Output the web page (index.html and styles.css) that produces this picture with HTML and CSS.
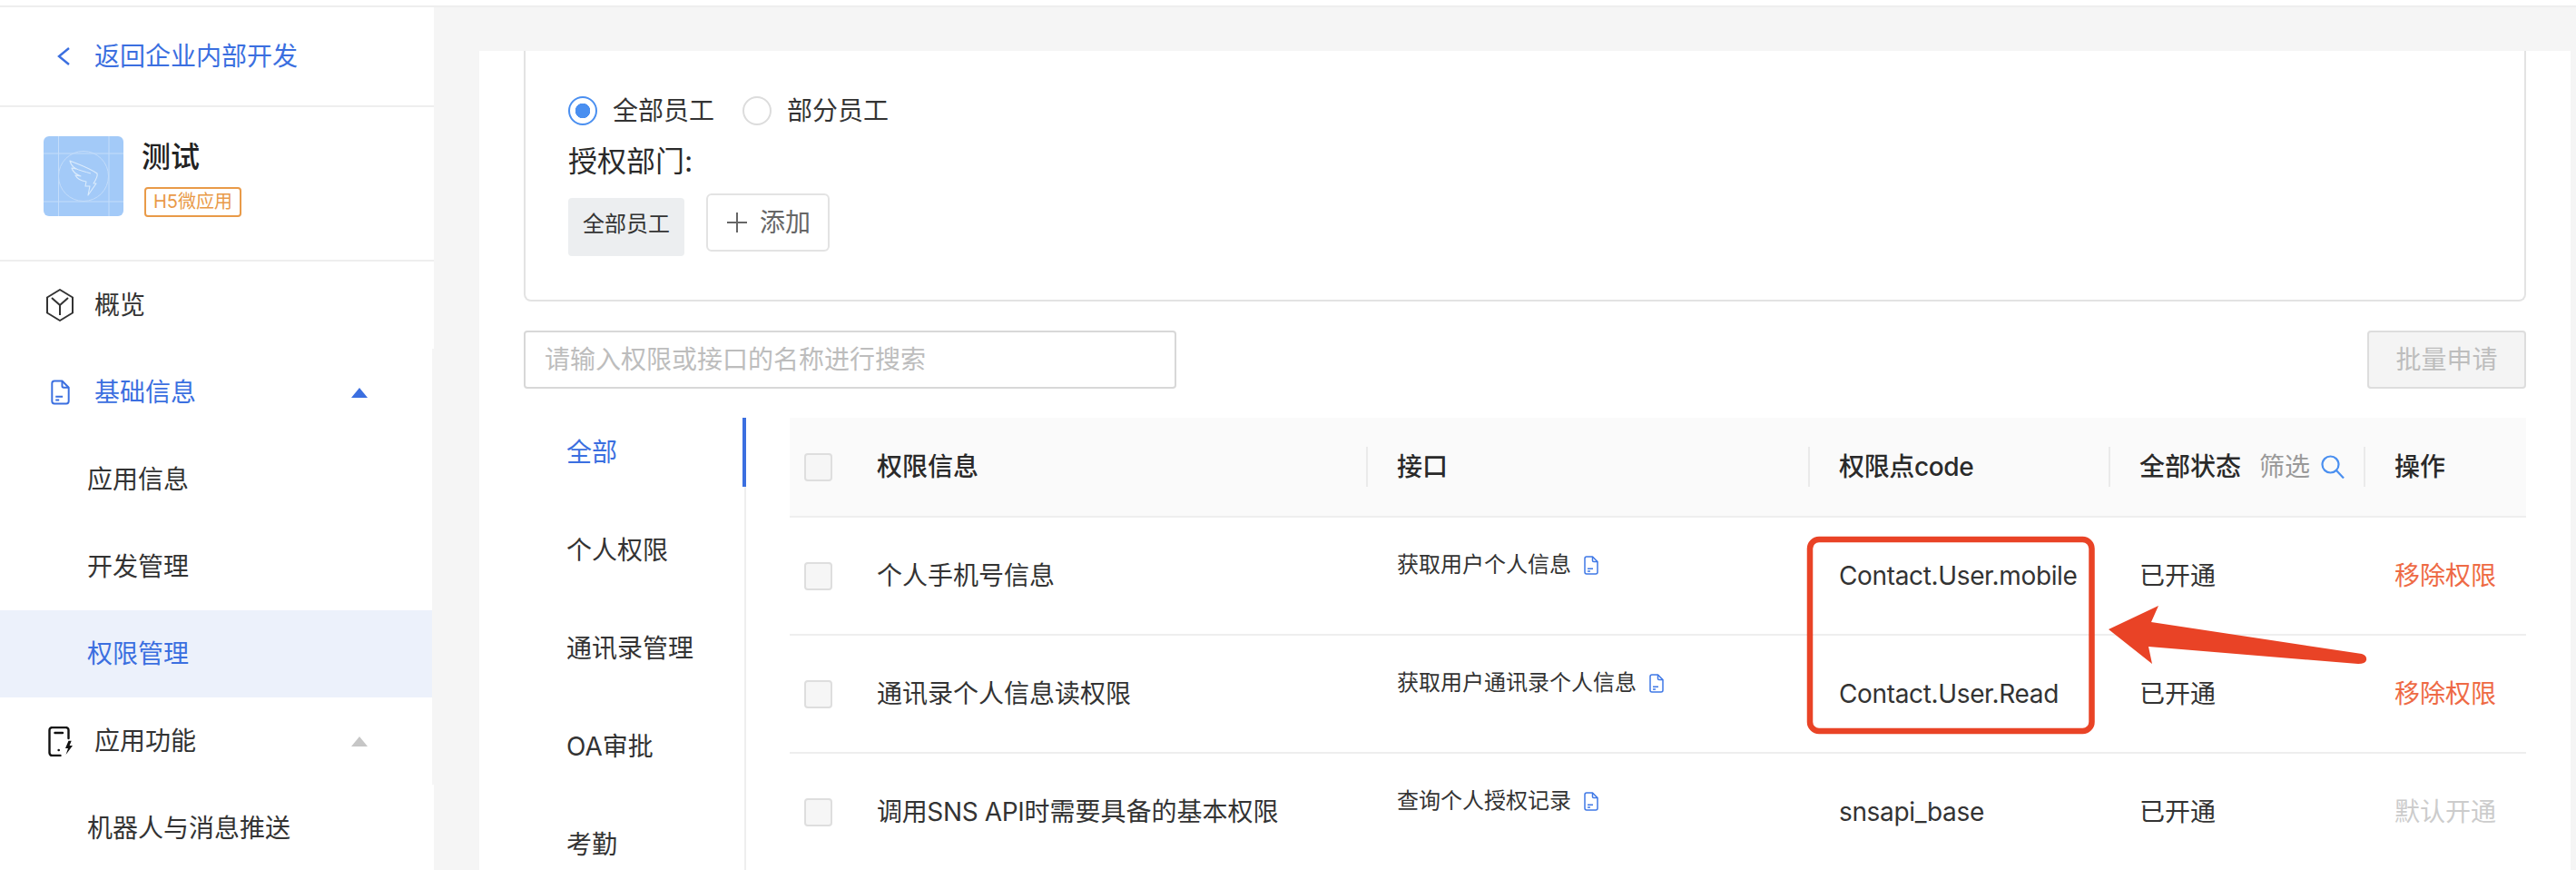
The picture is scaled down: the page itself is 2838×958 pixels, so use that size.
FILE: index.html
```html
<!DOCTYPE html>
<html lang="zh-CN">
<head>
<meta charset="utf-8">
<title>权限管理</title>
<link rel="stylesheet" href="styles.css">
</head>
<body>
<svg class="sprite" width="0" height="0" aria-hidden="true">
  <symbol id="doc" viewBox="0 0 16 21">
    <path d="M3 1h6.5L15 6.5V18a2 2 0 0 1-2 2H3a2 2 0 0 1-2-2V3a2 2 0 0 1 2-2z" fill="none" stroke="currentColor" stroke-width="1.5" stroke-linejoin="round"/>
    <path d="M9.5 1v4.2a1.3 1.3 0 0 0 1.3 1.3H15M4 14.2h6M4 17h3" fill="none" stroke="currentColor" stroke-width="1.5"/>
  </symbol>
</svg>
<div class="topbar"></div>
<div class="shell">
  <aside class="sidebar">
    <div class="back">
      <svg class="chevron" width="16" height="22" viewBox="0 0 16 22"><path d="M14 2 3 11l11 9" fill="none" stroke="#3b6fe0" stroke-width="2.4"/></svg>
      <span>返回企业内部开发</span>
    </div>
    <div class="app">
      <svg class="app-icon" width="88" height="88" viewBox="0 0 88 88">
        <rect width="88" height="88" rx="6" fill="#a3caf8"/>
        <path d="M16.5 0v88M72 0v88M0 19h88M0 72h88" stroke="#c4ddfa" stroke-width="1" fill="none"/>
        <circle cx="44" cy="44" r="27.500" fill="none" stroke="#c4ddfa" stroke-width="1"/>
        <path d="M29 27c10 4 22 8 30 14 1 3-2 8-4 11h3L49 65l2-10h-5l1-5c-6-1-10-3-12-7l6 1c-5-2-9-5-10-9l5 1c-4-2-6-5-7-9z" fill="none" stroke="#dcecfc" stroke-width="1.100" stroke-linejoin="round"/>
        <path d="M34 35c6 3 12 4 18 6" fill="none" stroke="#dcecfc" stroke-width="1"/>
      </svg>
      <div class="app-info">
        <div class="app-name">测试</div>
        <div class="app-tag">H5微应用</div>
      </div>
    </div>
    <nav class="menu">
      <div class="menu-item">
        <span class="menu-icon"><svg width="30" height="36" viewBox="0 0 30 36"><path d="M15 1 29 9.500v17L15 35 1 26.500v-17zM6 10l9 8 9-8M15 18v11" fill="none" stroke="#333" stroke-width="2" stroke-linejoin="round"/></svg></span>
        <span>概览</span>
      </div>
      <div class="menu-group">
        <div class="menu-item is-open">
          <span class="menu-icon"><svg class="menu-doc" width="21" height="28"><use href="#doc"/></svg></span>
          <span>基础信息</span>
          <svg class="caret" width="18" height="11" viewBox="0 0 18 11"><path d="M9 0 18 11H0z" fill="#3b6fe0"/></svg>
        </div>
        <div class="menu-sub">应用信息</div>
        <div class="menu-sub">开发管理</div>
        <div class="menu-sub is-active">权限管理</div>
        <div class="menu-item">
          <span class="menu-icon"><svg width="27" height="33" viewBox="0 0 27 33"><path d="M22.500 13V4a3 3 0 0 0-3-3H4.500a3 3 0 0 0-3 3v25a3 3 0 0 0 3 3h9M7.500 7h8.500" fill="none" stroke="#111" stroke-width="2.400" stroke-linecap="round"/><circle cx="11.700" cy="26" r="1.300" fill="#111"/><path d="M22.500 15.700 19 24h3l-2.400 7L27 21h-3.400l2.100-5.300z" fill="#111"/></svg></span>
          <span>应用功能</span>
          <svg class="caret" width="18" height="11" viewBox="0 0 18 11"><path d="M9 0 18 11H0z" fill="#c6c6c6"/></svg>
        </div>
      </div>
      <div class="menu-sub">机器人与消息推送</div>
    </nav>
  </aside>
  <main class="content">
    <div class="panel">
      <section class="card">
        <div class="radios">
          <span class="radio is-checked"></span><span class="radio-label">全部员工</span>
          <span class="radio"></span><span class="radio-label">部分员工</span>
        </div>
        <div class="dept-label">授权部门:</div>
        <div class="dept-row">
          <span class="dept-tag">全部员工</span>
          <span class="add-btn"><svg width="22" height="22" viewBox="0 0 22 22"><path d="M11 0v22M0 11h22" stroke="#666" stroke-width="2" fill="none"/></svg>添加</span>
        </div>
      </section>
      <div class="toolbar">
        <div class="search">请输入权限或接口的名称进行搜索</div>
        <div class="apply-btn">批量申请</div>
      </div>
      <div class="body">
        <ul class="tabs">
          <li class="tab is-active">全部</li>
          <li class="tab">个人权限</li>
          <li class="tab">通讯录管理</li>
          <li class="tab">OA审批</li>
          <li class="tab">考勤</li>
        </ul>
        <div class="table">
          <div class="row head">
            <span class="check"></span>
            <span>权限信息</span>
            <span class="th">接口</span>
            <span class="th latin">权限点code</span>
            <span class="th status-head">全部状态<span class="filter">筛选</span><svg width="26" height="26" viewBox="0 0 26 26"><circle cx="10.500" cy="10.500" r="9" fill="none" stroke="#4a8ff0" stroke-width="2.200"/><path d="m17 17 8 8.500" stroke="#4a8ff0" stroke-width="2.200" fill="none"/></svg></span>
            <span class="th">操作</span>
          </div>
          <div class="row">
            <span class="check"></span>
            <span>个人手机号信息</span>
            <span class="api">获取用户个人信息<svg class="api-doc" width="16" height="21"><use href="#doc"/></svg></span>
            <span class="latin">Contact.User.mobile</span>
            <span>已开通</span>
            <span class="remove">移除权限</span>
          </div>
          <div class="row">
            <span class="check"></span>
            <span>通讯录个人信息读权限</span>
            <span class="api">获取用户通讯录个人信息<svg class="api-doc" width="16" height="21"><use href="#doc"/></svg></span>
            <span class="latin">Contact.User.Read</span>
            <span>已开通</span>
            <span class="remove">移除权限</span>
          </div>
          <div class="row">
            <span class="check"></span>
            <span><span class="latin">调用SNS API</span>时需要具备的基本权限</span>
            <span class="api">查询个人授权记录<svg class="api-doc" width="16" height="21"><use href="#doc"/></svg></span>
            <span class="latin">snsapi_base</span>
            <span>已开通</span>
            <span class="default">默认开通</span>
          </div>
        </div>
      </div>
    </div>
  </main>
</div>
<svg class="annotation" width="2838" height="958" viewBox="0 0 2838 958" aria-hidden="true">
  <rect x="1994" y="594" width="310.500" height="211" rx="10" fill="none" stroke="#e94326" stroke-width="6.500"/>
  <path d="M2323 693 2378 667 2370 685 2602 720Q2608 722 2607 727 2606 731 2598 731L2367 712 2371 731z" fill="#e94326"/>
</svg>
</body>
</html>
```
FILE: styles.css
```css
* { box-sizing: border-box; }
html, body { margin: 0; padding: 0; }
body {
  position: relative;
  width: 2838px;
  height: 958px;
  overflow: hidden;
  background: #f5f5f5;
  color: #333;
  font-family: Inter, "Noto Sans CJK SC", sans-serif;
  font-size: 28px;
  line-height: 40px;
}
.sprite { position: absolute; }
.topbar { height: 8px; background: #fff; border-bottom: 2px solid #eeeeee; }
.shell { display: flex; height: 950px; }

/* Sidebar */
.sidebar { width: 478px; flex: none; background: #fff; height: 950px; overflow: hidden; }
.back {
  display: flex; align-items: center; height: 110px;
  padding: 0 0 0 62px; color: #3b6fe0;
  border-bottom: 2px solid #eeeeee;
}
.chevron { margin-right: 26px; }
.app {
  display: flex; height: 170px; padding: 32px 0 0 48px;
  border-bottom: 2px solid #eeeeee;
}
.app-icon { flex: none; }
.app-info { margin-left: 20px; }
.app-name { font-size: 32px; font-weight: 500; line-height: 40px; margin-top: 3px; color: #222; }
.app-tag {
  width: 107px; height: 33px; margin: 13px 0 0 3px;
  border: 2px solid #e99a48; border-radius: 4px;
  color: #e99a48; font-size: 20px; line-height: 29px; text-align: center;
}
.menu-group { border-right: 2px solid #f5f5f5; width: 478px; }
.menu-item { display: flex; align-items: center; height: 96px; padding-left: 51px; }
.menu-item.is-open { color: #3b6fe0; }
.menu-icon { display: flex; justify-content: center; width: 30px; margin-right: 23px; }
.menu-doc { color: #3b6fe0; }
.caret { margin-left: auto; margin-right: 71px; }
.menu-sub { display: flex; align-items: center; height: 96px; padding-left: 96px; }
.menu-sub.is-active { background: #ecf1fb; color: #3b6fe0; }

/* Main */
.content { flex: 1; min-width: 0; padding: 48px 0 0 50px; }
.panel { width: 2304px; height: 902px; background: #fff; padding: 0 49px; overflow: hidden; }
.card {
  height: 276px; padding: 49px 0 0 47px;
  border: 2px solid #e3e3e3; border-top: 0;
  border-radius: 0 0 8px 8px;
}
.radios { display: flex; align-items: center; height: 32px; margin-top: 1px; }
.radio {
  width: 32px; height: 32px; border-radius: 50%;
  border: 2px solid #dcdcdc; margin-right: 17px;
}
.radio.is-checked {
  border-color: #4a8ff0;
  background: radial-gradient(circle, #4a8ff0 0 8px, #fff 8.5px);
}
.radio-label { margin-right: 31px; }
.dept-label { font-size: 32px; line-height: 40px; margin-top: 20px; color: #2a2a2a; }
.dept-row { display: flex; align-items: flex-start; gap: 24px; margin-top: 15px; }
.dept-tag {
  width: 128px; height: 64px; margin-top: 5px;
  background: #eceef0; border-radius: 4px;
  font-size: 24px; line-height: 58px; text-align: center;
}
.add-btn {
  display: flex; align-items: center; width: 136px; height: 64px; padding: 0 0 0 21px;
  border: 2px solid #e3e3e3; border-radius: 6px; color: #666; gap: 14px;
}
.toolbar { display: flex; justify-content: space-between; margin-top: 32px; }
.search {
  width: 719px; height: 64px; padding-left: 21px;
  border: 2px solid #d8d8d8; border-radius: 4px;
  color: #bdbdbd; line-height: 60px;
}
.apply-btn {
  width: 175px; height: 64px;
  background: #f4f4f4; border: 2px solid #dddddd; border-radius: 4px;
  color: #bdbdbd; line-height: 60px; text-align: center;
}
.body { display: flex; margin-top: 32px; }
.tabs {
  flex: none; width: 245px; height: 600px; margin: 0; padding: 0 0 0 47px;
  list-style: none; border-right: 2px solid #eeeeee;
}
.tab { display: flex; align-items: center; height: 76px; margin: 0 -2px 32px 0; }
.tab.is-active { color: #3b6fe0; border-right: 4px solid #3b6fe0; }
.table { flex: 1; margin-left: 48px; min-width: 0; }
.row {
  display: grid;
  grid-template-columns: 96px 573px 487px 331px 281px 145px;
  align-items: center;
  height: 130px;
  border-bottom: 2px solid #eeeeee;
}
.row > .check { margin-left: 16px; }
.check {
  display: block; width: 31px; height: 31px;
  background: #f6f6f6; border: 2px solid #dedede; border-radius: 4px;
}
.head { height: 110px; background: #fafafa; font-weight: 500; color: #2a2a2a; }
.th { position: relative; }
.th::before {
  content: ""; position: absolute; left: -34px; top: -2px; bottom: -2px;
  width: 2px; background: #eaeaea;
}
.status-head { display: flex; align-items: center; }
.status-head svg { margin-left: 12px; }
.filter { margin-left: 20px; color: #999; font-weight: 400; }
.latin { letter-spacing: -0.35px; }
.api { display: flex; align-items: center; font-size: 24px; padding-bottom: 24px; }
.api-doc { margin-left: 14px; color: #3f78e6; }
.remove { color: #ee6a45; }
.default { color: #cccccc; }

/* Annotation drawn on top of the screenshot */
.annotation { position: absolute; top: 0; left: 0; pointer-events: none; }
```
